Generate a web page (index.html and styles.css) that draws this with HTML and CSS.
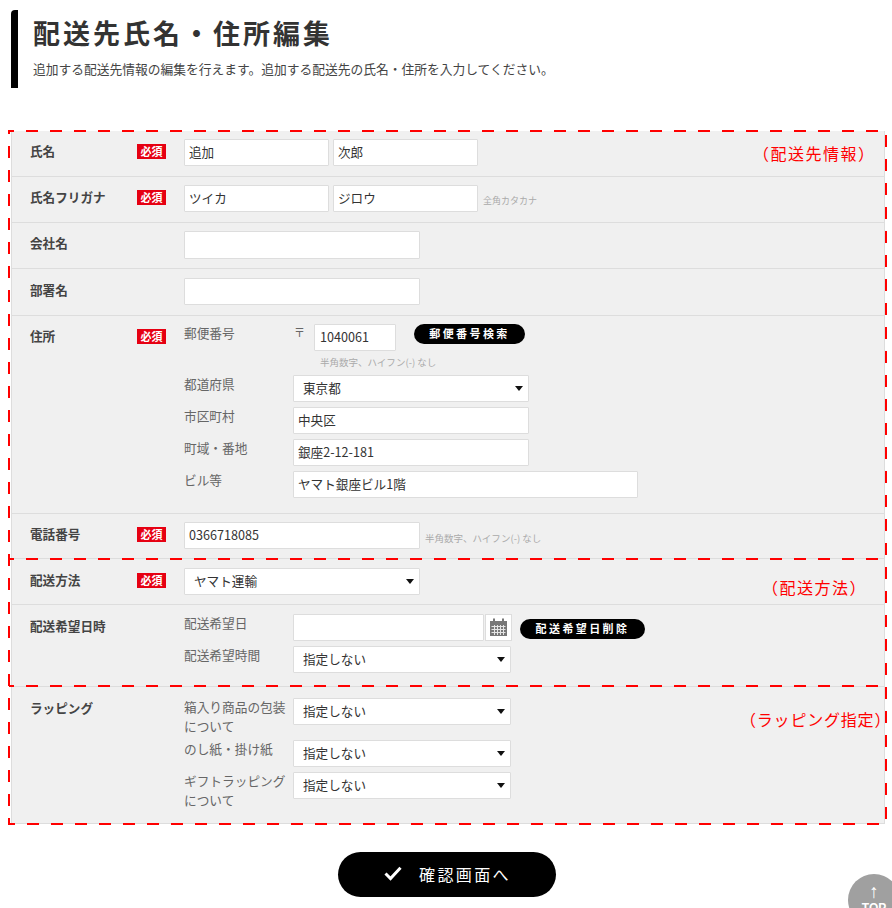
FILE: index.html
```html
<!DOCTYPE html>
<html lang="ja">
<head>
<meta charset="utf-8">
<title>配送先氏名・住所編集</title>
<link rel="stylesheet" href="styles.css">
</head>
<body>
<header class="head">
  <h1 class="title">配送先氏名・住所編集</h1>
  <p class="lead">追加する配送先情報の編集を行えます。追加する配送先の氏名・住所を入力してください。</p>
</header>

<form class="panel">
  <div class="row r1">
    <div class="label">氏名</div><div class="badge-cell"><span class="badge">必須</span></div>
    <div class="field"><input class="in w145" value="追加"><input class="in w145 ml4" value="次郎"></div>
  </div>
  <div class="row r1">
    <div class="label">氏名フリガナ</div><div class="badge-cell"><span class="badge">必須</span></div>
    <div class="field"><input class="in w145" value="ツイカ"><input class="in w145 ml4" value="ジロウ"><span class="note side">全角カタカナ</span></div>
  </div>
  <div class="row r3">
    <div class="label">会社名</div><div class="badge-cell"></div>
    <div class="field"><input class="in w236 h28"></div>
  </div>
  <div class="row r4">
    <div class="label">部署名</div><div class="badge-cell"></div>
    <div class="field"><input class="in w236"></div>
  </div>
  <div class="row r5">
    <div class="label">住所</div><div class="badge-cell"><span class="badge">必須</span></div>
    <div class="stack">
      <div class="sub">
        <div class="sublabel">郵便番号</div>
        <span class="zipmark">〒</span><input class="in zip" value="1040061"><button type="button" class="pill zipbtn">郵便番号検索</button>
      </div>
      <div class="note wide zipnote">半角数字、ハイフン(-) なし</div>
      <div class="sub"><div class="sublabel">都道府県</div><div class="sel w236"><select class="select"><option>東京都</option></select></div></div>
      <div class="sub"><div class="sublabel">市区町村</div><input class="in w236 flat" value="中央区"></div>
      <div class="sub"><div class="sublabel">町域・番地</div><input class="in w236 flat" value="銀座2-12-181"></div>
      <div class="sub"><div class="sublabel">ビル等</div><input class="in w345 flat" value="ヤマト銀座ビル1階"></div>
    </div>
  </div>
  <div class="row r6">
    <div class="label">電話番号</div><div class="badge-cell"><span class="badge">必須</span></div>
    <div class="field"><input class="in w236" value="0366718085"><span class="note wide side">半角数字、ハイフン(-) なし</span></div>
  </div>
  <div class="row r7">
    <div class="label">配送方法</div><div class="badge-cell"><span class="badge">必須</span></div>
    <div class="field"><div class="sel w236"><select class="select"><option>ヤマト運輸</option></select></div></div>
  </div>
  <div class="row r8">
    <div class="label">配送希望日時</div><div class="badge-cell"></div>
    <div class="stack">
      <div class="sub">
        <div class="sublabel">配送希望日</div>
        <input class="in date">
        <div class="cal">
          <svg width="19" height="19" viewBox="0 0 19 19" aria-hidden="true">
            <rect class="cal-fill" x="1" y="3" width="17" height="15"/>
            <rect class="cal-fill" x="4" y="0.5" width="2" height="5"/>
            <rect class="cal-fill" x="13" y="0.5" width="2" height="5"/>
            <path class="cal-grid" d="M2.5 8.5h14M2.5 11.5h14M2.5 14.5h14M5.5 7v10M8.5 7v10M11.5 7v10M14.5 7v10"/>
          </svg>
        </div>
        <button type="button" class="pill datebtn">配送希望日削除</button>
      </div>
      <div class="sub"><div class="sublabel">配送希望時間</div><div class="sel w218"><select class="select"><option>指定しない</option></select></div></div>
    </div>
  </div>
  <div class="row r9">
    <div class="label raised">ラッピング</div><div class="badge-cell"></div>
    <div class="stack">
      <div class="sub"><div class="sublabel">箱入り商品の包装について</div><div class="sel w218"><select class="select"><option>指定しない</option></select></div></div>
      <div class="sub"><div class="sublabel">のし紙・掛け紙</div><div class="sel w218"><select class="select"><option>指定しない</option></select></div></div>
      <div class="sub"><div class="sublabel">ギフトラッピングについて</div><div class="sel w218"><select class="select"><option>指定しない</option></select></div></div>
    </div>
  </div>
</form>

<div class="actions">
  <button type="button" class="confirm">
    <svg class="check" width="18" height="15" viewBox="0 0 18 15" aria-hidden="true"><path d="M1.5 7.5l5 5L16.5 1.8"/></svg>
    <span>確認画面へ</span>
  </button>
</div>

<svg class="marks" width="892" height="908" aria-hidden="true">
  <rect x="9" y="131" width="877" height="693"/>
  <line x1="9" y1="559" x2="886" y2="559"/>
  <line x1="9" y1="686" x2="886" y2="686"/>
</svg>
<div class="note-red n1">（配送先情報）</div>
<div class="note-red n2">（配送方法）</div>
<div class="note-red n3">（ラッピング指定）</div>

<a class="top" href="#"><span class="top-arrow">↑</span><span class="top-text">TOP</span></a>
</body>
</html>
```
FILE: styles.css
```css
* { box-sizing: border-box; }
html, body { height: 908px; overflow: hidden; }
body {
  margin: 0;
  position: relative;
  background: #fff;
  color: #333;
  font-family: "Noto Sans CJK JP", "Noto Sans", sans-serif;
  font-size: 12.6px;
}
.head {
  margin: 10px 0 0 11px;
  height: 78px;
  padding: 0 0 0 15px;
  border-left: 7px solid #000;
  border-radius: 4px 0 0 0;
}
.title {
  margin: 0;
  padding-top: 4px;
  font-size: 27px;
  line-height: 38px;
  font-weight: 700;
  letter-spacing: 3px;
  color: #333;
}
.lead {
  margin: 7px 0 0;
  font-size: 12.75px;
  line-height: 20px;
  color: #444;
}
.panel {
  margin: 43px 7px 0 11px;
  background: #f0f0f0;
  border-left: 1px solid #ddd;
  border-right: 1px solid #ddd;
}
.row {
  display: flex;
  align-items: flex-start;
  padding-left: 18px;
  border-bottom: 1px solid #ddd;
}
.r1 { padding-top: 8px; padding-bottom: 10px; }
.r3 { padding-top: 8px; padding-bottom: 9px; }
.r4 { padding-top: 9px; padding-bottom: 10px; }
.r5 { padding-top: 8px; padding-bottom: 15px; }
.r6 { padding-top: 8px; padding-bottom: 9px; }
.r7 { padding-top: 9px; padding-bottom: 9px; }
.r8 { padding-top: 9px; padding-bottom: 13px; }
.r9 { padding-top: 11px; padding-bottom: 14px; }
.label {
  width: 107px;
  flex: none;
  font-weight: 700;
  line-height: 23px;
  color: #444;
}
.raised { margin-top: -2px; }
.badge-cell { width: 47px; flex: none; height: 24px; padding-top: 5px; }
.badge {
  display: block;
  width: 29px;
  height: 15px;
  background: #e60012;
  color: #fff;
  font-family: "Noto Sans CJK JP", sans-serif;
  font-size: 11px;
  font-weight: 700;
  line-height: 15px;
  text-align: center;
}
.field { display: flex; align-items: flex-start; }
.stack { display: flex; flex-direction: column; gap: 5px; }
.sub { display: flex; align-items: flex-start; }
.sublabel {
  width: 105px;
  margin-right: 4px;
  flex: none;
  line-height: 18.5px;
  font-size: 12.7px;
  color: #666;
}
.in {
  display: block;
  height: 27px;
  padding: 0 0 2px 4px;
  border: 1px solid #ddd;
  border-radius: 1px;
  background: #fff;
  color: #333;
  font-family: "Noto Sans CJK JP", sans-serif;
  font-size: 12.6px;
  outline: none;
}
.w145 { width: 145px; }
.w236 { width: 236px; }
.w218 { width: 218px; }
.w345 { width: 345px; }
.h28 { height: 28px; }
.ml4 { margin-left: 4px; }
.flat { flex: none; }
.zip { width: 82px; padding-left: 5px; }
.zipmark { width: 21px; flex: none; line-height: 16px; font-size: 11px; color: #666; padding-left: 1px; }
.note { font-size: 9px; color: #aaa; }
.wide { font-size: 9.5px; white-space: nowrap; }
.side { margin: 0 0 0 5px; line-height: 16px; padding-top: 8px; }
.zipnote { margin: -2px 0 0 136px; line-height: 16px; height: 16px; }
.pill {
  display: block;
  height: 20px;
  padding: 0 0 1px;
  border: 0;
  border-radius: 10px;
  background: #000;
  color: #fff;
  font-family: "Noto Sans CJK JP", sans-serif;
  font-size: 11px;
  font-weight: 700;
  letter-spacing: 2.4px;
  line-height: 19px;
  text-align: center;
}
.zipbtn { width: 111px; margin-left: 18px; }
.datebtn { width: 125px; margin: 5px 0 0 8px; }
.date { width: 191px; }
.cal {
  width: 27px;
  height: 27px;
  margin-left: 1px;
  padding: 3px 0 0 3px;
  border: 1px solid #ddd;
  background: #fff;
}
.cal svg { display: block; }
.cal-fill { fill: #777; }
.cal-grid { fill: none; stroke: #e4e4e4; stroke-width: 1; }
.sel { position: relative; flex: none; }
.sel::after {
  content: "";
  position: absolute;
  top: 11px;
  right: 6px;
  border-style: solid;
  border-width: 5px 4px 0;
  border-color: #111 transparent transparent;
  pointer-events: none;
}
.select {
  display: block;
  width: 100%;
  height: 27px;
  padding: 0 0 2px 9px;
  appearance: none;
  -webkit-appearance: none;
  border: 1px solid #ddd;
  border-radius: 1px;
  background: #fff;
  color: #333;
  font-family: "Noto Sans CJK JP", sans-serif;
  font-size: 12.6px;
  outline: none;
}
.actions { display: flex; justify-content: center; margin-top: 28px; padding-left: 2px; }
.confirm {
  display: flex;
  align-items: center;
  width: 218px;
  height: 45px;
  padding: 0 0 2px 46px;
  border: 0;
  border-radius: 23px;
  background: #000;
  color: #fff;
  font-family: "Noto Sans CJK JP", sans-serif;
  font-size: 16px;
  letter-spacing: 2.4px;
}
.check { margin-right: 17px; fill: none; stroke: #fff; stroke-width: 3; }
.marks { position: absolute; left: 0; top: 0; pointer-events: none; }
.marks rect, .marks line { fill: none; stroke: #f00; stroke-width: 2; stroke-dasharray: 12 12; stroke-dashoffset: 7; }
.note-red {
  position: absolute;
  color: #f00;
  font-size: 16px;
  font-weight: 400;
  letter-spacing: 1.5px;
  line-height: 20px;
  white-space: nowrap;
}
.n1 { left: 753px; top: 143px; }
.n2 { left: 762px; top: 577px; }
.n3 { left: 740px; top: 709px; letter-spacing: 0.8px; }
.top {
  position: absolute;
  left: 848px;
  top: 874px;
  width: 52px;
  height: 52px;
  border-radius: 50%;
  background: #a0a0a0;
  color: #fff;
  text-align: center;
  text-decoration: none;
}
.top-arrow { display: block; font-family: "Liberation Sans", sans-serif; font-size: 19px; line-height: 18px; padding-top: 9px; height: 28px; }
.top-text { display: block; font-family: "Liberation Sans", sans-serif; font-size: 12px; font-weight: 700; line-height: 12px; }
```
